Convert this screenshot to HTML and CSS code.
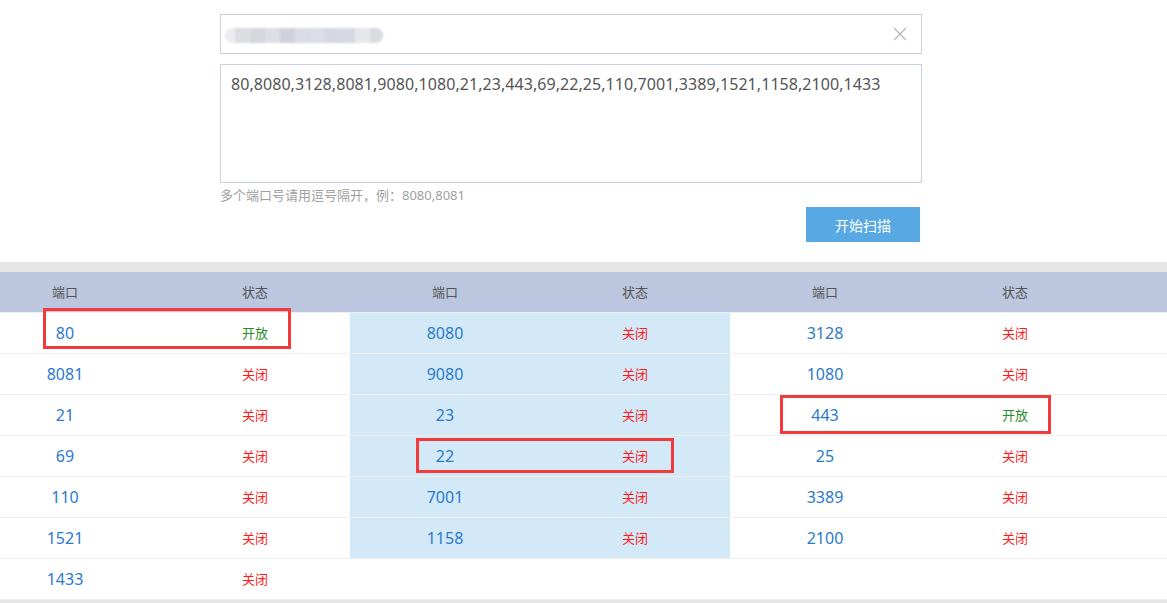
FILE: index.html
```html
<!DOCTYPE html>
<html lang="zh-CN">
<head>
    <meta charset="UTF-8">
    <meta name="viewport" content="width=device-width, initial-scale=1.0">
    <title>端口扫描</title>
    <link rel="stylesheet" href="styles.css">
</head>
<body>

    <!-- 扫描表单 -->
    <div class="scan-section">
        <div class="scan-form">
            <div class="host-input">
                <div class="blurred">
                    <span class="b1"></span><span class="b2"></span><span class="b3"></span><span class="b4"></span>
                    <span class="b5"></span><span class="b6"></span><span class="b7"></span><span class="b8"></span>
                    <span class="b9"></span><span class="b10"></span><span class="b11"></span>
                </div>
                <svg class="clear-icon" width="14" height="14" viewBox="0 0 14 14">
                    <path d="M1 1 L13 13 M13 1 L1 13" stroke="#b4b4b4" stroke-width="1.1" fill="none"/>
                </svg>
            </div>
            <div class="ports-input">80,8080,3128,8081,9080,1080,21,23,443,69,22,25,110,7001,3389,1521,1158,2100,1433</div>
            <p class="hint">多个端口号请用逗号隔开，例：8080,8081</p>
            <div class="button-container">
                <button class="scan-btn">开始扫描</button>
            </div>
        </div>
    </div>

    <div class="band"></div>

    <!-- 扫描结果 -->
    <div class="result-wrap">
        <div class="result-table">
            <div class="row head">
                <div class="pair"><span>端口</span><span>状态</span></div>
                <div class="pair"><span>端口</span><span>状态</span></div>
                <div class="pair"><span>端口</span><span>状态</span></div>
            </div>
            <div class="row">
                <div class="pair"><span class="port">80</span><span class="open">开放</span></div>
                <div class="pair mid"><span class="port">8080</span><span class="closed">关闭</span></div>
                <div class="pair"><span class="port">3128</span><span class="closed">关闭</span></div>
            </div>
            <div class="row">
                <div class="pair"><span class="port">8081</span><span class="closed">关闭</span></div>
                <div class="pair mid"><span class="port">9080</span><span class="closed">关闭</span></div>
                <div class="pair"><span class="port">1080</span><span class="closed">关闭</span></div>
            </div>
            <div class="row">
                <div class="pair"><span class="port">21</span><span class="closed">关闭</span></div>
                <div class="pair mid"><span class="port">23</span><span class="closed">关闭</span></div>
                <div class="pair"><span class="port">443</span><span class="open">开放</span></div>
            </div>
            <div class="row">
                <div class="pair"><span class="port">69</span><span class="closed">关闭</span></div>
                <div class="pair mid"><span class="port">22</span><span class="closed">关闭</span></div>
                <div class="pair"><span class="port">25</span><span class="closed">关闭</span></div>
            </div>
            <div class="row">
                <div class="pair"><span class="port">110</span><span class="closed">关闭</span></div>
                <div class="pair mid"><span class="port">7001</span><span class="closed">关闭</span></div>
                <div class="pair"><span class="port">3389</span><span class="closed">关闭</span></div>
            </div>
            <div class="row">
                <div class="pair"><span class="port">1521</span><span class="closed">关闭</span></div>
                <div class="pair mid"><span class="port">1158</span><span class="closed">关闭</span></div>
                <div class="pair"><span class="port">2100</span><span class="closed">关闭</span></div>
            </div>
            <div class="row last">
                <div class="pair"><span class="port">1433</span><span class="closed">关闭</span></div>
            </div>
        </div>

        <!-- 标注框 -->
        <div class="mark mark-1"></div>
        <div class="mark mark-2"></div>
        <div class="mark mark-3"></div>
    </div>

    <div class="band bottom"></div>

</body>
</html>
```

FILE: styles.css
```css
body {
    margin: 0;
    padding: 0;
    background-color: #fff;
    font-family: "Noto Sans", "Noto Sans CJK SC", sans-serif;
    color: #555;
}
.scan-section {
    padding: 14px 0 20px;
}
.scan-form {
    width: 702px;
    margin-left: 220px;
}
.host-input {
    box-sizing: border-box;
    height: 40px;
    border: 1px solid #c9d0e0;
    display: flex;
    align-items: center;
    justify-content: space-between;
    padding: 0 12px 0 4px;
    margin-bottom: 10px;
}
.blurred {
    display: flex;
    height: 15px;
    margin-top: 2px;
    filter: blur(1px);
}
.blurred span {
    width: 15px;
    height: 15px;
}
.blurred .b1 { background: #ececf0; border-radius: 7px 0 0 7px; width: 10px; }
.blurred .b2 { background: #dcdce3; }
.blurred .b3 { background: #d5d6de; }
.blurred .b4 { background: #dddee4; }
.blurred .b5 { background: #cfd1db; }
.blurred .b6 { background: #dadce4; }
.blurred .b7 { background: #dadee7; }
.blurred .b8 { background: #d6d8e1; }
.blurred .b9 { background: #d5d9e2; }
.blurred .b10 { background: #e6e7ec; }
.blurred .b11 { background: #d8dae2; border-radius: 0 7px 7px 0; width: 13px; }
.clear-icon {
    display: block;
    margin-right: 2px;
}
.ports-input {
    box-sizing: border-box;
    height: 119px;
    border: 1px solid #c9d0e0;
    padding: 8px 10px;
    font-size: 16px;
    line-height: 22px;
    letter-spacing: 0.06px;
    color: #555;
}
.hint {
    margin: 3px 0 0;
    font-size: 13px;
    line-height: 18px;
    color: #a0a0a0;
}
.button-container {
    display: flex;
    justify-content: flex-end;
    padding-right: 2px;
    margin-top: 3px;
}
.scan-btn {
    width: 114px;
    height: 35px;
    border: none;
    background-color: #58a9e3;
    color: #fff;
    font-family: "Noto Sans CJK SC", sans-serif;
    font-size: 14px;
    cursor: pointer;
}

.band {
    height: 10px;
    background-color: #e6e6e6;
}
.band.bottom {
    height: 4px;
}

/* 结果表格 */
.result-wrap {
    position: relative;
    overflow: hidden;
}
.result-table {
    margin-left: -30px;
}
.row {
    display: flex;
    height: 40px;
    border-top: 1px solid #efefef;
}
.row.last {
    border-bottom: 1px solid #efefef;
}
.row.head {
    border-top: none;
    background-color: #bcc6de;
}
.pair {
    display: flex;
    width: 380px;
}
.pair.mid {
    background-color: #d3e9f8;
}
.pair span {
    width: 190px;
    text-align: center;
    line-height: 40px;
    font-size: 13px;
}
.row.head span {
    color: #555;
}
.pair .port {
    font-size: 16px;
    color: #2b7acb;
}
.pair .closed {
    color: #ff1a1a;
}
.pair .open {
    color: #2a8a2a;
}

.mark {
    position: absolute;
    box-sizing: border-box;
    border: 3px solid #f23a3a;
}
.mark-1 { left: 43px; top: 36px; width: 248px; height: 41px; }
.mark-2 { left: 416px; top: 166px; width: 258px; height: 35px; }
.mark-3 { left: 780px; top: 123px; width: 271px; height: 39px; }
```
